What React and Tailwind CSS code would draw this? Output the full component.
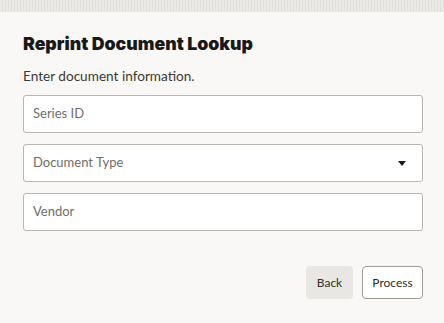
import React from "react";

const FIELDS = [
  { label: "Series ID" },
  { label: "Document Type", select: true },
  { label: "Vendor" },
];

function Field({ label, select }) {
  return (
    <div className="flex items-center justify-between h-[38px] bg-white border border-[#b9b6b2] rounded-[3px] pl-[9px] pr-[15px]">
      <span className="text-[13px] text-[#716d69]">{label}</span>
      {select && (
        <svg width="8" height="5" viewBox="0 0 8 5" className="text-[#1f1c1a] mr-[1px]">
          <path d="M0 0h8L4 5z" fill="currentColor" />
        </svg>
      )}
    </div>
  );
}

export default function App() {
  return (
    <div
      className="w-[444px] h-[323px] bg-[#f9f8f6] flex flex-col"
      style={{ fontFamily: 'Lato, "Open Sans", sans-serif' }}
    >
      {/* textured strip */}
      <div className="h-[12px] bg-[#e8e6e3] bg-[repeating-linear-gradient(90deg,#ebe9e6_0px,#ebe9e6_2px,#e2e0dd_2px,#e2e0dd_3px)]" />

      <div className="px-[23px] pt-[21px] flex flex-col">
        <h1
          className="text-[17.7px] leading-[22px] font-black text-[#1a1816]"
          style={{ fontFamily: "Inter, sans-serif" }}
        >
          Reprint Document Lookup
        </h1>
        <p className="mt-[12px] text-[13.6px] leading-[18px] text-[#3b3835]">
          Enter document information.
        </p>

        <div className="mt-[10px] flex flex-col gap-[11px] w-[400px]">
          {FIELDS.map((f) => (
            <Field key={f.label} {...f} />
          ))}
        </div>

        <div className="mt-[35px] flex justify-end gap-[9px] w-[400px]">
          <button className="h-[33px] w-[47px] rounded-[4px] bg-[#e9e7e4] text-[12px] text-[#2f2c29]">
            Back
          </button>
          <button className="h-[33px] w-[61px] rounded-[4px] bg-white border border-[#9e9a96] text-[12px] text-[#2f2c29]">
            Process
          </button>
        </div>
      </div>
    </div>
  );
}
